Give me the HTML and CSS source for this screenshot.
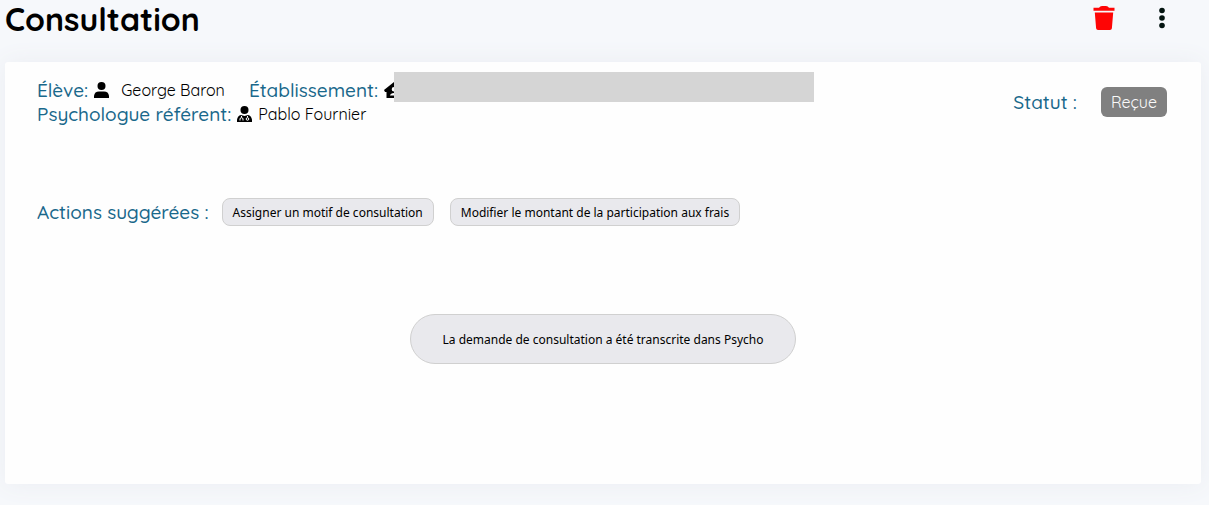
FILE: index.html
```html
<!DOCTYPE html>
<html lang="fr">
<head>
<meta charset="utf-8">
<title>Consultation</title>
<link rel="stylesheet" href="styles.css">
</head>
<body>
<header class="page-header">
  <h1 class="title">Consultation</h1>
  <div class="tools">
    <button class="icon-button" type="button" aria-label="Supprimer">
      <svg width="22" height="24" viewBox="0 0 22 24" fill="#fe0505"><path d="M.5 1.800H6Q7 0 9 0h4q2 0 3 1.800h5.500v3H.5zM1.800 6.500h18.400l-1.300 15.800q-.2 1.700-1.900 1.700H5q-1.700 0-1.900-1.700z"/></svg>
    </button>
    <button class="icon-button" type="button" aria-label="Plus d’options">
      <svg width="8" height="22" viewBox="0 0 8 22" fill="#031410"><circle cx="4" cy="3.500" r="2.800"/><circle cx="4" cy="11" r="2.800"/><circle cx="4" cy="18.500" r="2.800"/></svg>
    </button>
  </div>
</header>
<main class="card">
  <section class="summary">
    <div class="details">
      <div class="line">
        <span class="label">Élève:</span>
        <svg class="icon" width="15" height="16" viewBox="0 0 15 16"><circle cx="7.500" cy="4" r="4"/><path d="M0 16v-2.200Q.6 9.500 5 9.500h5q4.400 0 5 4.300V16z"/></svg>
        <span class="value student">George Baron</span>
        <span class="label school-label">Établissement:</span>
        <span class="school">
          <svg class="icon" width="20" height="16" viewBox="0 0 20 16"><path fill-rule="evenodd" d="M10 0l10 8-1 2h-1.500v6h-15v-6H1L0 8zM10 5a2.300 2.300 0 0 0 0 4.600A2.300 2.300 0 0 0 10 5zM6 13.500h8q-.5-2.500-4-2.500t-4 2.500z"/></svg>
          <span class="mask"></span>
        </span>
      </div>
      <div class="line">
        <span class="label">Psychologue référent:</span>
        <svg class="icon" width="15" height="16" viewBox="0 0 15 16"><circle cx="7.500" cy="4" r="4"/><path d="M0 16v-2.200Q.6 9.500 4 9l3.500 1L11 9q3.400.5 4 4.800V16z"/><g fill="none" stroke="#fff"><path d="M4.500 10v1.500M3 14.500V13q0-1.300 1.500-1.300T6 13v1.500M10.500 10v1.500"/><circle cx="10.500" cy="13" r="1.300"/></g></svg>
        <span class="value">Pablo Fournier</span>
      </div>
    </div>
    <div class="status"><span class="label">Statut :</span><span class="badge">Reçue</span></div>
  </section>
  <section class="actions">
    <span class="label">Actions suggérées :</span>
    <div class="action-list">
      <button class="action" type="button">Assigner un motif de consultation</button>
      <button class="action" type="button">Modifier le montant de la participation aux frais</button>
    </div>
  </section>
  <p class="notice">La demande de consultation a été transcrite dans Psycho</p>
</main>
</body>
</html>
```
FILE: styles.css
```css
* { box-sizing: border-box; }
body {
  margin: 0;
  padding: 0 8px 21px 5px;
  min-height: 100vh;
  display: flex;
  flex-direction: column;
  background: #f6f8fb;
  color: #000;
  font-family: Quicksand, Lato, sans-serif;
}
.page-header {
  display: flex;
  justify-content: space-between;
  height: 62px;
  padding-right: 35px;
}
.title { margin: 0; font-size: 32px; line-height: 38px; font-weight: 700; }
.tools { display: flex; gap: 43px; height: 36px; align-items: center; }
.icon-button { display: flex; padding: 0; border: 0; background: none; }
.card {
  flex: 1;
  padding: 16px 32px 32px;
  border-radius: 3px;
  background: #fefefe;
  box-shadow: 0 0 24px #ebedf2;
}
.summary {
  display: flex;
  justify-content: space-between;
  align-items: center;
  padding-right: 2px;
}
.line { display: flex; align-items: center; height: 24px; gap: 6px; }
.label { color: #19688b; font-size: 19px; line-height: 24px; font-weight: 500; }
.icon { display: block; flex: none; }
.value { font-size: 16px; line-height: 24px; }
.student { margin-left: 6px; }
.school-label { margin-left: 18px; }
.school { position: relative; }
.mask {
  position: absolute;
  left: 10px;
  top: -10px;
  width: 420px;
  height: 30px;
  background: #d5d5d5;
}
.status { display: flex; align-items: center; gap: 24px; }
.badge {
  padding: 0 10px;
  border-radius: 6px;
  background: #808080;
  color: #fafafa;
  font-size: 16px;
  line-height: 30px;
}
.actions { display: flex; align-items: center; gap: 13px; margin-top: 72px; }
.action-list { display: flex; gap: 16px; }
.action, .notice {
  border: 1px solid #d0d0d0;
  background: #e9e9ed;
  color: #000;
  font-family: Tahoma, "Noto Sans", sans-serif;
  font-size: 12px;
}
.action { height: 28px; padding: 0 10px; border-radius: 8px; }
.notice {
  width: fit-content;
  margin: 88px auto 0;
  padding: 2px 32px 0;
  border-radius: 25px;
  line-height: 46px;
}
```
